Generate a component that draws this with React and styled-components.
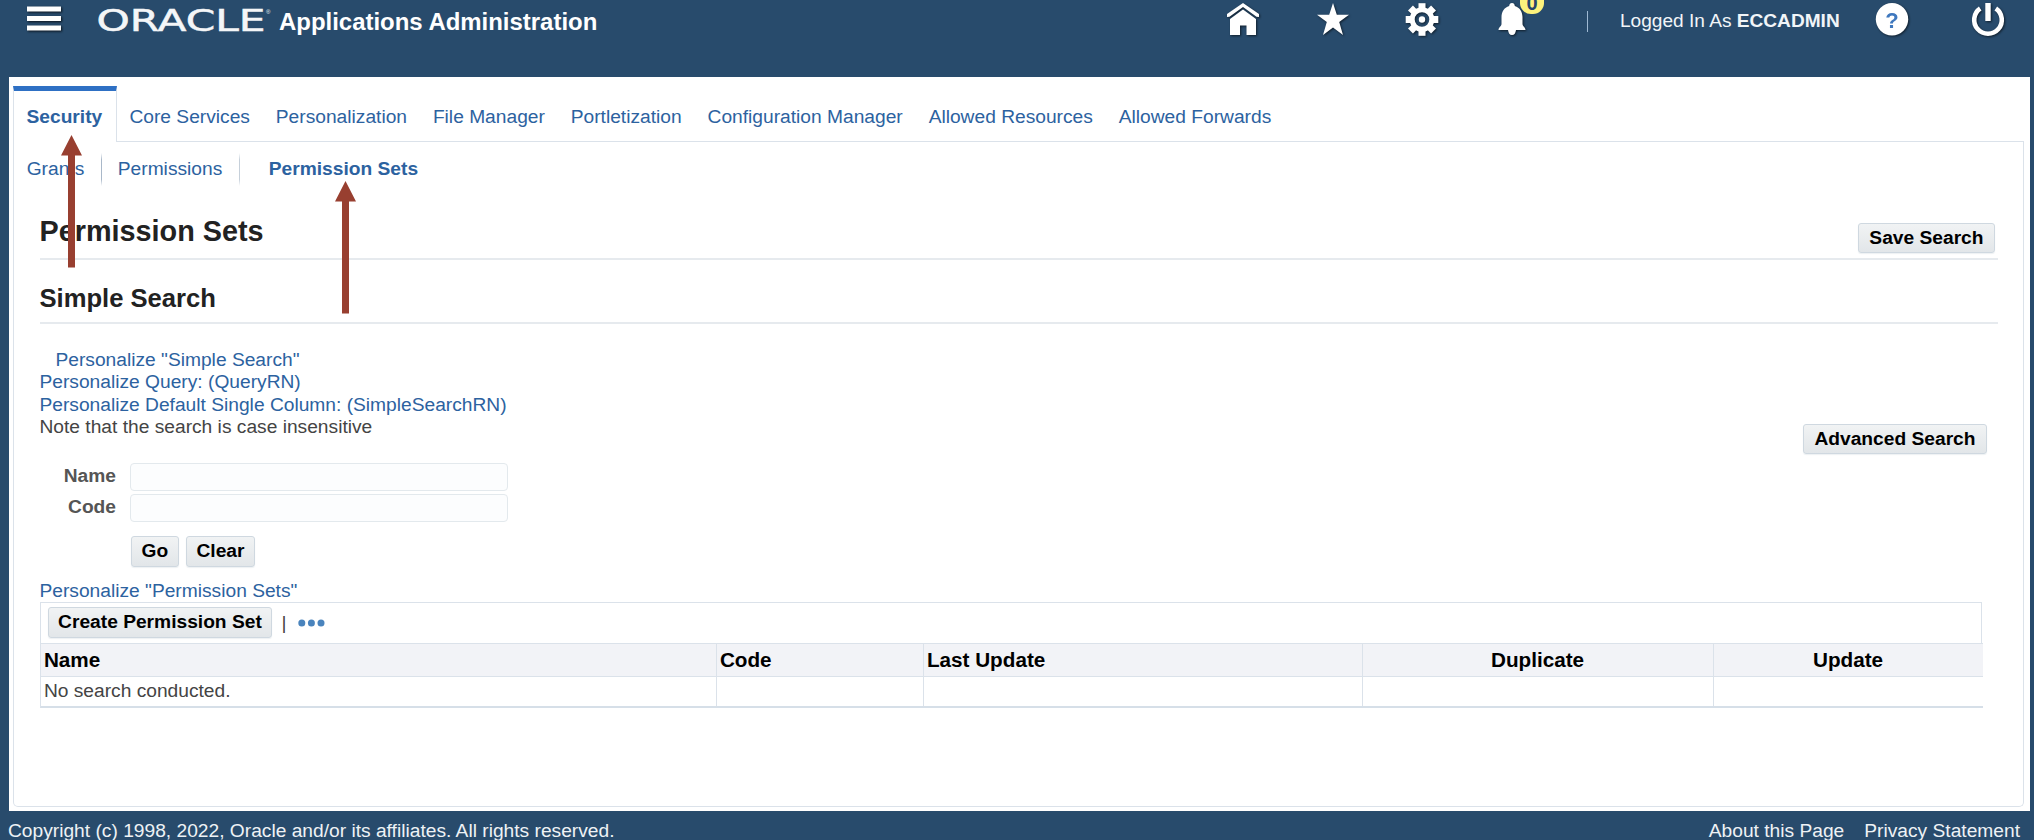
import React from "react";
import styled, { createGlobalStyle, css } from "styled-components";

const c = {
  navy: "#284b6c",
  link: "#2c62a0",
  line: "#dbe2ea",
  rule: "#e6eaee",
  arrow: "#983f30",
};

const Global = createGlobalStyle`
  * { box-sizing: border-box; }
  body {
    margin: 0;
    background: ${c.navy};
    font-family: "Liberation Sans", Arial, sans-serif;
    font-size: 19.2px;
    line-height: 22.4px;
    color: #444;
    overflow: hidden;
  }
`;

const Page = styled.div`
  position: relative;
  display: flex;
  flex-direction: column;
  width: 2034px;
  height: 840px;
  overflow: hidden;
  background: ${c.navy};
`;

const Header = styled.header`
  display: flex;
  align-items: flex-start;
  height: 77px;
  padding: 3px 29px 0 27px;
  color: #fff;
`;

const MenuIcon = styled.svg`
  margin-top: 3px;
  width: 38px;
  height: 28px;
  overflow: visible;
  filter: drop-shadow(1.5px 1.5px 0.8px rgba(0, 0, 0, 0.75));
`;

const Logo = styled.svg`
  margin-left: 32px;
  width: 176px;
  height: 34px;
  overflow: visible;
`;

const AppTitle = styled.h1`
  margin: 5px 0 0 6px;
  font-size: 23.95px;
  line-height: 28px;
  font-weight: bold;
`;

const HeaderTools = styled.div`
  display: flex;
  margin-left: auto;
`;

const ToolButton = styled.span`
  position: relative;
  display: block;
  width: 34px;
  height: 34px;
  margin-right: ${(p) => p.$gap ?? 56}px;
  svg {
    display: block;
    overflow: visible;
    filter: drop-shadow(1.5px 1.5px 0.8px rgba(0, 0, 0, 0.6));
  }
`;

const Badge = styled.span`
  position: absolute;
  left: 25px;
  top: -15px;
  width: 24px;
  height: 26px;
  border-radius: 11px;
  background: #fdf27c;
  color: #25466b;
  font-weight: bold;
  font-size: 20px;
  line-height: 30px;
  text-align: center;
`;

const ToolDivider = styled.span`
  width: 1px;
  height: 21px;
  margin: 8px 32px 0 0;
  background: #9fb9d3;
`;

const UserInfo = styled.span`
  width: 221px;
  margin: 7px 34px 0 0;
  white-space: nowrap;
  font-size: 19.1px;
  color: #f1f5f8;
`;

const Panel = styled.main`
  display: flex;
  flex-direction: column;
  width: 2021px;
  height: 734px;
  margin-left: 9px;
  padding: 9px 6px 4px 4px;
  background: #fff;
`;

const TabBar = styled.nav`
  display: flex;
  height: 56px;
`;

const TabFill = styled.div`
  flex: 1;
  border-bottom: 1px solid ${c.line};
`;

const Tab = styled.a`
  padding: 20px 12.95px 0;
  color: ${c.link};
  white-space: nowrap;
  border-bottom: 1px solid ${c.line};
  ${(p) =>
    p.$active &&
    css`
      width: 103.5px;
      padding: 15px 0 0 12.5px;
      font-weight: bold;
      border: 1px solid ${c.line};
      border-top: 5px solid #2e70c4;
      border-bottom: 0;
    `}
`;

const Body = styled.section`
  flex: 1;
  border: 1px solid ${c.line};
  border-top: 0;
  border-radius: 0 0 5px 5px;
`;

const SubTabs = styled.nav`
  display: flex;
  height: 56px;
  padding: 11px 0 0 12.7px;
`;

const SubTab = styled.a`
  height: 33px;
  padding: 4.5px 0 0;
  margin-right: 16.5px;
  color: ${c.link};
  font-weight: ${(p) => (p.$active ? "bold" : "normal")};
`;

const SubDivider = styled.span`
  width: 1px;
  height: 33px;
  margin-right: ${(p) => p.$gap}px;
  background: linear-gradient(#fff, ${(p) => p.$tone} 20%, ${(p) => p.$tone} 80%, #fff);
`;

const Content = styled.div`
  padding: 0 25.5px 0 25.5px;
`;

const TitleRow = styled.div`
  display: flex;
  justify-content: space-between;
  height: 62px;
  padding: 16px 3px 0 0;
  border-bottom: 2px solid ${c.rule};
`;

const Title = styled.h2`
  margin: 0;
  font-size: 28.8px;
  line-height: 34px;
  color: #222;
`;

const SectionTitle = styled.h3`
  height: 64px;
  margin: 0;
  padding: 22.5px 0 0;
  font-size: 25.6px;
  line-height: 30px;
  color: #222;
  border-bottom: 2px solid ${c.rule};
`;

const Button = styled.button`
  height: ${(p) => p.$height ?? 31}px;
  padding: 0 ${(p) => p.$pad ?? 10}px 1px;
  border: 1px solid #cfd8e0;
  border-radius: 3px;
  background: linear-gradient(#f1f3f4, #e2e6e9);
  color: #000;
  font: bold 19.2px/26px "Liberation Sans", Arial, sans-serif;
  white-space: nowrap;
  display: block;
  box-shadow: 0 1px 1px rgba(110, 130, 150, 0.12);
`;

const SaveSlot = styled.div`
  margin-top: 9px;
`;

const SearchIntro = styled.div`
  display: flex;
  justify-content: space-between;
  height: 139px;
  padding: 25px 11px 0 0;
`;

const LinkList = styled.div`
  display: flex;
  flex-direction: column;
`;

const Line = styled.span`
  height: 22.4px;
  padding-left: ${(p) => (p.$indent ? 16 : 0)}px;
  color: ${(p) => (p.$plain ? "#444" : c.link)};
`;

const AdvancedSlot = styled.div`
  margin-top: 75px;
`;

const Form = styled.div`
  display: flex;
  flex-direction: column;
  gap: 3px;
`;

const Field = styled.label`
  display: flex;
  height: 28px;
  font-weight: bold;
  color: #555;
`;

const FieldName = styled.span`
  width: 76.5px;
  padding-top: 2px;
  text-align: right;
`;

const Input = styled.input`
  width: 378px;
  height: 28px;
  margin-left: 14px;
  border: 1px solid #e3e9ed;
  border-radius: 4px;
  background: #fcfdfe;
`;

const Actions = styled.div`
  display: flex;
  gap: 7px;
  margin: 14px 0 12.5px 91.5px;
`;

const TableBox = styled.div`
  width: 1943px;
  margin-top: 0.5px;
`;

const TableTools = styled.div`
  display: flex;
  align-items: center;
  width: 1942px;
  height: 41px;
  padding: 0 0 1px 7px;
  border: 1px solid ${c.line};
  border-bottom: 0;
`;

const Pipe = styled.span`
  margin: 0 12px 0 9px;
`;

const Table = styled.div`
  display: grid;
  grid-template-columns: 676px 207px 439px 351px 269px;
  border-left: 1px solid ${c.line};
  border-bottom: 2px solid #d6dfe8;
`;

const Head = styled.div`
  height: 34px;
  padding: 5px 3.4px 0;
  border: 1px solid ${c.line};
  border-width: 1px ${(p) => (p.$last ? 0 : 1)}px 1px 0;
  background: #f2f3f7;
  color: #000;
  font-weight: bold;
  font-size: 20.7px;
  text-align: ${(p) => (p.$center ? "center" : "left")};
`;

const Cell = styled.div`
  height: 29px;
  padding: 3px 3.4px 0;
  border-right: ${(p) => (p.$last ? 0 : 1)}px solid ${c.line};
`;

const Footer = styled.footer`
  display: flex;
  height: 29px;
  padding: 9px 14px 0 8px;
  color: #eef2f5;
`;

const FooterLink = styled.span`
  margin-left: ${(p) => (p.$first ? "auto" : "20px")};
`;

const Arrow = styled.svg`
  position: absolute;
  left: ${(p) => p.$x}px;
  top: ${(p) => p.$y}px;
`;

const Pointer = ({ x, y }) => (
  <Arrow $x={x} $y={y} width="21" height="133" viewBox="0 0 21 133">
    <path d="M10.5 0L21 20.5H14V132.5H7V20.5H0Z" fill={c.arrow} />
  </Arrow>
);

const tabs = ["Core Services", "Personalization", "File Manager", "Portletization", "Configuration Manager", "Allowed Resources", "Allowed Forwards"];
const columns = ["Name", "Code", "Last Update", "Duplicate", "Update"];
const teeth = [0, 45, 90, 135, 180, 225, 270, 315];

export default function App() {
  return (
    <>
      <Global />
      <Page>
        <Header>
          <MenuIcon viewBox="0 0 38 28" fill="#fff">
            <rect y="0.5" width="34" height="5" />
            <rect y="10" width="34" height="5" />
            <rect y="19.5" width="34" height="5" />
          </MenuIcon>
          <Logo viewBox="0 0 176 34" fill="#f4f6f8">
            <text x="-0.5" y="28" fontFamily="DejaVu Sans" fontSize="30" textLength="169" lengthAdjust="spacingAndGlyphs" stroke="#f4f6f8" strokeWidth="0.5">ORACLE</text>
            <text x="169" y="11" fontFamily="Liberation Sans" fontSize="6">®</text>
          </Logo>
          <AppTitle>Applications Administration</AppTitle>
          <HeaderTools>
            <ToolButton>
              <svg width="34" height="34" viewBox="0 0 34 34" fill="#fff">
                <path d="M1 11L17 0L33 11V14L30.5 13.8L17 4L3.5 13.8L1 14Z" />
                <path d="M4 16L17 6.5L30 16V32H20.5V22.5H14V32H4Z" />
              </svg>
            </ToolButton>
            <ToolButton $gap={55}>
              <svg width="34" height="34" viewBox="0 0 34 34" fill="#fff">
                <path d="M17 0L20.8 11.7H33L23.2 19L27 32L17 24.5L7 32L10.8 19L1 11.7H13.2Z" />
              </svg>
            </ToolButton>
            <ToolButton $gap={56}>
              <svg width="34" height="34" viewBox="0 0 34 34" fill="#fff">
                {teeth.map((a) => (
                  <rect key={a} x="13.5" y="0.2" width="7" height="8" transform={`rotate(${a} 17 16.5)`} />
                ))}
                <circle cx="17" cy="16.5" r="9.8" fill="none" stroke="#fff" strokeWidth="5" />
                <circle cx="17" cy="16.5" r="3.2" />
              </svg>
            </ToolButton>
            <ToolButton $gap={58}>
              <svg width="34" height="34" viewBox="0 0 34 34" fill="#fff">
                <path d="M17 0C19 0 19.8 1.5 19.8 3C25 4.5 27.5 9 27.5 14V21C27.5 23.5 30.5 24 30.5 27H21C20.5 30 19.5 32 17 32S13.5 30 13 27H3.5C3.5 24 6.5 23.5 6.5 21V14C6.5 9 9 4.5 14.2 3C14.2 1.5 15 0 17 0Z" />
              </svg>
              <Badge>0</Badge>
            </ToolButton>
            <ToolDivider />
            <UserInfo>
              Logged In As <b>ECCADMIN</b>
            </UserInfo>
            <ToolButton $gap={62}>
              <svg width="34" height="34" viewBox="0 0 34 34">
                <circle cx="17" cy="16.3" r="16.2" fill="#fff" />
                <text x="17" y="25" textAnchor="middle" fontFamily="Liberation Sans" fontWeight="bold" fontSize="22" fill="#3f78be">?</text>
              </svg>
            </ToolButton>
            <ToolButton $gap={0}>
              <svg width="34" height="34" viewBox="0 0 34 34" fill="none" stroke="#fff" strokeWidth="4.6">
                <path d="M9.2 5.5A13.8 13.8 0 1 0 24.8 5.5" />
                <path d="M17 0V18" strokeWidth="5.4" />
              </svg>
            </ToolButton>
          </HeaderTools>
        </Header>
        <Panel>
          <TabBar>
            <Tab $active>Security</Tab>
            {tabs.map((t) => (
              <Tab key={t}>{t}</Tab>
            ))}
            <TabFill />
          </TabBar>
          <Body>
            <SubTabs>
              <SubTab>Grants</SubTab>
              <SubDivider $gap={16} $tone="#a9b8c9" />
              <SubTab>Permissions</SubTab>
              <SubDivider $gap={29} $tone="#c6d0da" />
              <SubTab $active>Permission Sets</SubTab>
            </SubTabs>
            <Content>
              <TitleRow>
                <Title>Permission Sets</Title>
                <SaveSlot>
                  <Button $height={30}>Save Search</Button>
                </SaveSlot>
              </TitleRow>
              <SectionTitle>Simple Search</SectionTitle>
              <SearchIntro>
                <LinkList>
                  <Line $indent>Personalize "Simple Search"</Line>
                  <Line>Personalize Query: (QueryRN)</Line>
                  <Line>Personalize Default Single Column: (SimpleSearchRN)</Line>
                  <Line $plain>Note that the search is case insensitive</Line>
                </LinkList>
                <AdvancedSlot>
                  <Button $height={30}>Advanced Search</Button>
                </AdvancedSlot>
              </SearchIntro>
              <Form>
                {["Name", "Code"].map((f) => (
                  <Field key={f}>
                    <FieldName>{f}</FieldName>
                    <Input />
                  </Field>
                ))}
              </Form>
              <Actions>
                <Button $pad={9.6}>Go</Button>
                <Button $pad={9.6}>Clear</Button>
              </Actions>
              <LinkList>
                <Line>Personalize "Permission Sets"</Line>
              </LinkList>
              <TableBox>
                <TableTools>
                  <Button $pad={9.6}>Create Permission Set</Button>
                  <Pipe>|</Pipe>
                  <svg width="28" height="8" fill="#4a84bd">
                    <circle cx="3.8" cy="4" r="3.5" />
                    <circle cx="13.4" cy="4" r="3.5" />
                    <circle cx="23" cy="4" r="3.5" />
                  </svg>
                </TableTools>
                <Table>
                  {columns.map((h, i) => (
                    <Head key={h} $center={i > 2} $last={i === 4}>{h}</Head>
                  ))}
                  {columns.map((h, i) => (
                    <Cell key={h} $last={i === 4}>{i === 0 ? "No search conducted." : ""}</Cell>
                  ))}
                </Table>
              </TableBox>
            </Content>
          </Body>
        </Panel>
        <Footer>
          <span>Copyright (c) 1998, 2022, Oracle and/or its affiliates. All rights reserved.</span>
          <FooterLink $first>About this Page</FooterLink>
          <FooterLink>Privacy Statement</FooterLink>
        </Footer>
        <Pointer x={61} y={135} />
        <Pointer x={335} y={181} />
      </Page>
    </>
  );
}
